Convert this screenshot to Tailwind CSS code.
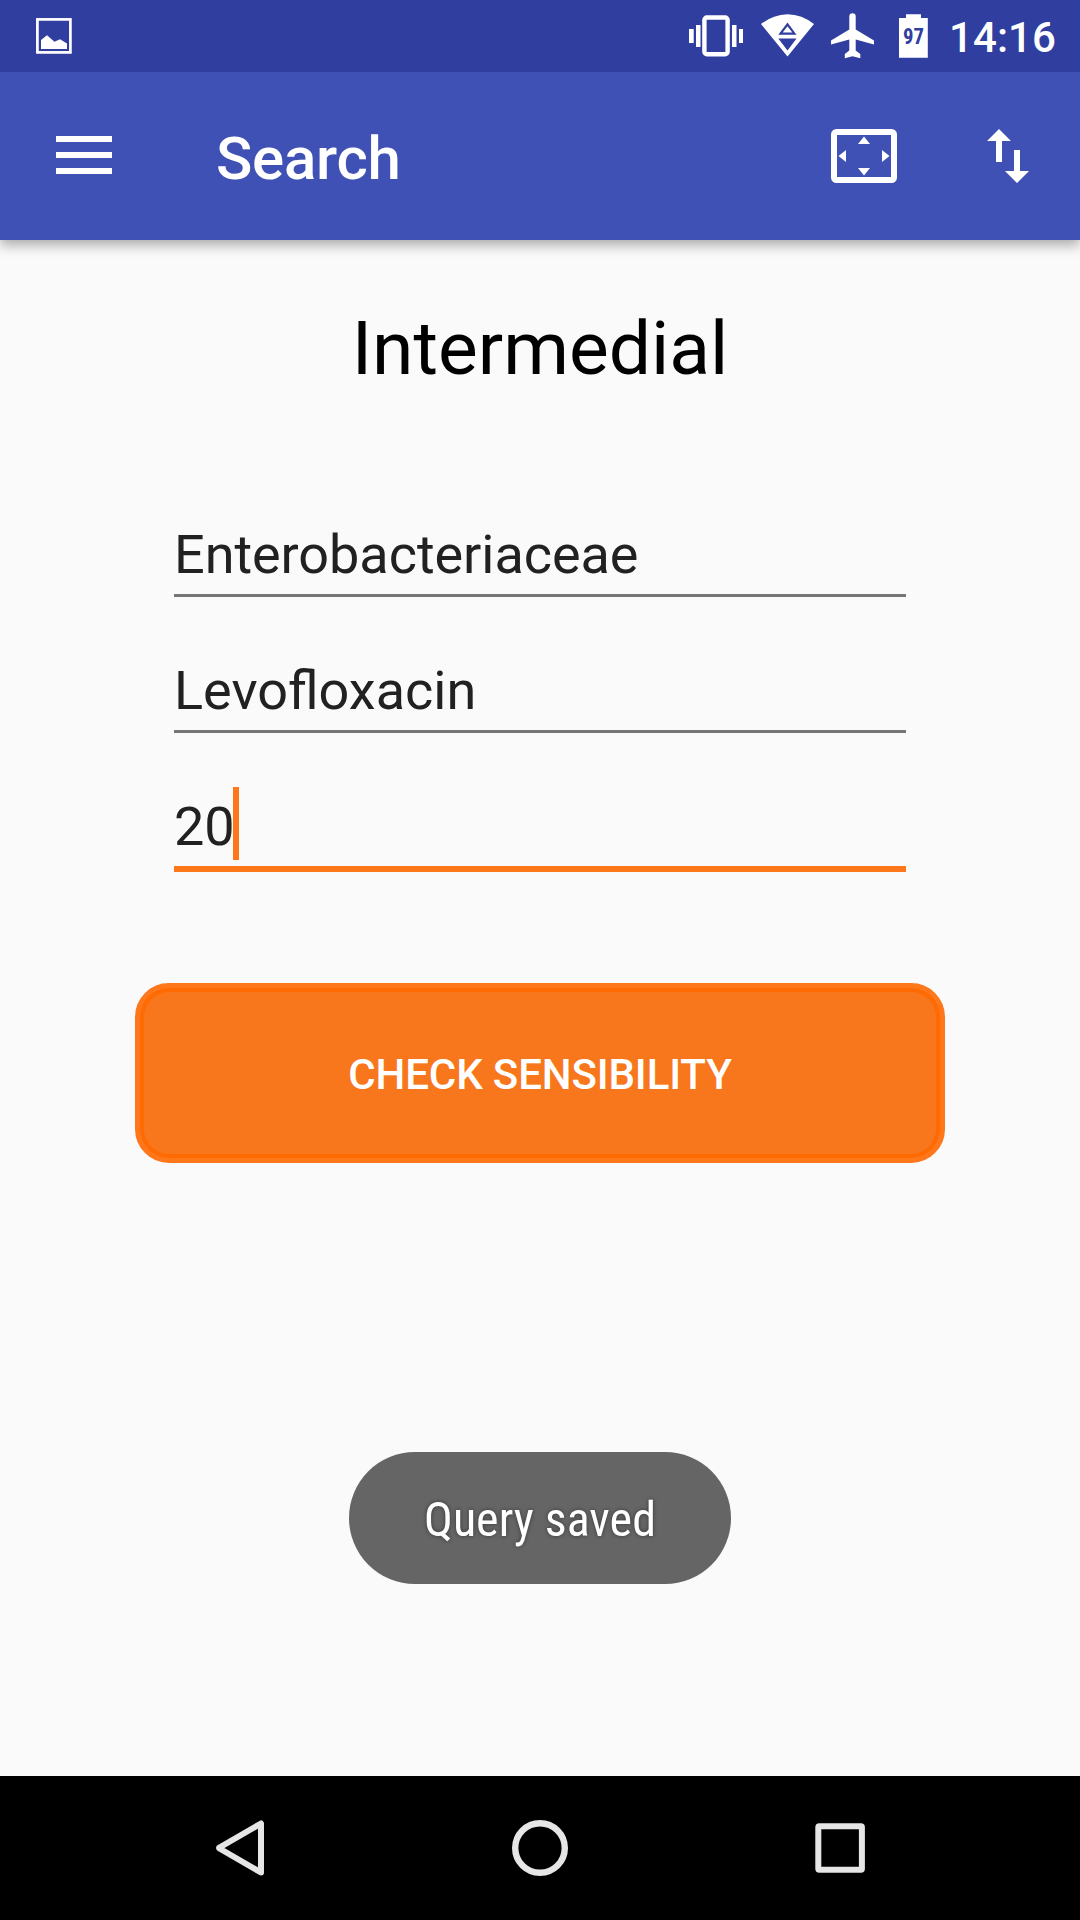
<!DOCTYPE html>
<html lang="en">
<head>
<meta charset="utf-8">
<title>Search</title>
<script src="https://cdn.jsdelivr.net/npm/@tailwindcss/browser@4"></script>
</head>
<body class="bg-[#fafafa]">
<div class="flex h-[1920px] w-[1080px] flex-col overflow-hidden bg-[#fafafa] font-['Roboto',sans-serif]">
  <!-- status bar -->
  <div class="relative z-10 flex h-[72px] shrink-0 justify-between bg-[#303f9f] text-white">
    <svg class="ml-[36px] mt-[18px] h-[36px] w-[36px]" viewBox="0 0 36 36" fill="none"><rect x="1.4" y="1.4" width="33" height="33" stroke="#fff" stroke-width="2.7"/><path d="M5 31V22L11 17.3L18.5 23.8L24 21.3L31 25.5V31Z" fill="#fff"/></svg>
    <div class="flex">
      <svg class="h-[72px] w-[261px]" viewBox="-11 0 261 72" fill="#fff">
        <g transform="translate(-9 0)">
          <!-- vibrate -->
          <rect x="14.400" y="17.500" width="23.200" height="36.800" rx="2.500" fill="none" stroke="#fff" stroke-width="4.400"/>
          <path d="M-1 29h4.700v14h-4.700zM6 25h4.500v22H6zM42 25h4.500v22H42zM49 29h4v14h-4z"/>
          <!-- wifi -->
          <path fill-rule="evenodd" d="M71 24Q83 14.500 97.500 14.200Q112 14.500 124 24L97.500 56.500ZM88.300 34.800H106.500L97.500 22.500ZM88.300 38.500L97.500 50.500L106.500 38.500Z"/>
          <path d="M92.700 32.600H102.300L97.500 26.200Z"/>
          <!-- airplane -->
          <path d="M184 44.500V40.500L165.700 29.500V16.500a3.200 3.200 0 0 0-6.400 0V29.500L141 40.500V44.500L159.300 39.500V50.500L154.800 54V58.300L162.500 56.300L170.300 58.300V54L165.700 50.500V39.500Z"/>
        </g>
        <!-- battery -->
        <path d="M207 14.300h15v3.800h6.800v39.600h-28.800V18.100h7z"/>
        <text x="214.500" y="43.800" text-anchor="middle" font-family="'Roboto Condensed',Roboto,sans-serif" font-weight="700" font-size="22" textLength="21" lengthAdjust="spacingAndGlyphs" fill="#303f9f">97</text>
      </svg>
      <span class="mr-[24px] mt-[2px] w-[107px] whitespace-nowrap text-right text-[42px] font-medium leading-[72px] tracking-[0.1px]">14:16</span>
    </div>
  </div>
  <!-- toolbar -->
  <header class="relative flex h-[168px] shrink-0 items-start bg-[#3f51b5] text-white shadow-[0_5px_12px_rgba(0,0,0,0.33)]">
    <svg class="ml-[56px] mt-[64px] h-[38px] w-[56px]" viewBox="0 0 56 38" fill="#fff"><path d="M0 0h56v6H0zM0 16h56v6H0zM0 32h56v6H0z"/></svg>
    <h1 class="ml-[104px] mt-[3px] text-[60px] font-medium leading-[168px] tracking-[-0.25px]">Search</h1>
    <div class="mr-[51px] mt-[57px] flex flex-1 justify-end gap-[90px]">
      <svg class="h-[54px] w-[66px]" viewBox="0 0 66 54"><rect x="3" y="3" width="60" height="48" rx="2.500" fill="none" stroke="#fff" stroke-width="6"/><path d="M27 15h12l-6-7.500zM27 39h12l-6 7.500zM15 21v12l-7.500-6zM51 21v12l7.500-6z" fill="#fff"/></svg>
      <svg class="h-[54px] w-[42px]" viewBox="0 0 42 54" fill="#fff"><path d="M12 0L0 12h9v21h6V12h9zM30 54l12-12h-9V21h-6v21h-9z"/></svg>
    </div>
  </header>
  <main class="flex flex-1 flex-col items-center">
    <h2 class="mt-[64px] text-[75px] leading-[88px] text-black">Intermedial</h2>
    <div class="mt-[107px] flex w-[732px] flex-col text-[54px] leading-[72px] text-[#212121]">
      <div class="h-[98px] border-b-[3px] border-[#757575] pt-[20px] tracking-[-0.05px]">Enterobacteriaceae</div>
      <div class="mt-[37px] h-[99px] border-b-[3px] border-[#757575] pt-[21px]">Levofloxacin</div>
      <div class="mt-[37px] flex h-[102px] border-b-[6px] border-[#ff771b]">
        <span class="w-[59px] pt-[21px]">20</span><span class="mt-[17px] h-[73px] w-[6px] bg-[#ff771b]"></span>
      </div>
    </div>
    <button class="mt-[111px] h-[180px] w-[810px] rounded-[34px] border-[5px] border-[#ff771b] bg-[#f9771c] pt-[3px] text-[42px] font-medium tracking-[-0.13px] text-white shadow-[inset_0_0_0_4px_#ff6a02]">CHECK SENSIBILITY</button>
    <div class="mt-[289px] flex h-[132px] w-[382px] items-center justify-center rounded-full bg-[#656565]">
      <svg class="h-[132px] w-[382px] drop-shadow-[0_0_2px_rgba(0,0,0,0.45)]" viewBox="0 0 382 132"><text x="75" y="84" font-family="'Roboto Condensed',Roboto,sans-serif" font-size="48" textLength="232" lengthAdjust="spacingAndGlyphs" fill="#fff">Query saved</text></svg>
    </div>
  </main>
  <!-- navigation bar -->
  <nav class="h-[144px] shrink-0 bg-black">
    <svg class="h-[144px] w-[1080px]" viewBox="0 0 1080 144" fill="none" stroke="#e6e6e6" stroke-width="6" stroke-linejoin="round"><path d="M261 47.500V96.500L219.500 72.500Q218.500 72 219.500 71.500Z"/><circle cx="540" cy="72" r="24.800" stroke-width="6.400"/><rect x="818.300" y="50.200" width="43.600" height="43.600" rx="1"/></svg>
  </nav>
</div>
</body>
</html>
